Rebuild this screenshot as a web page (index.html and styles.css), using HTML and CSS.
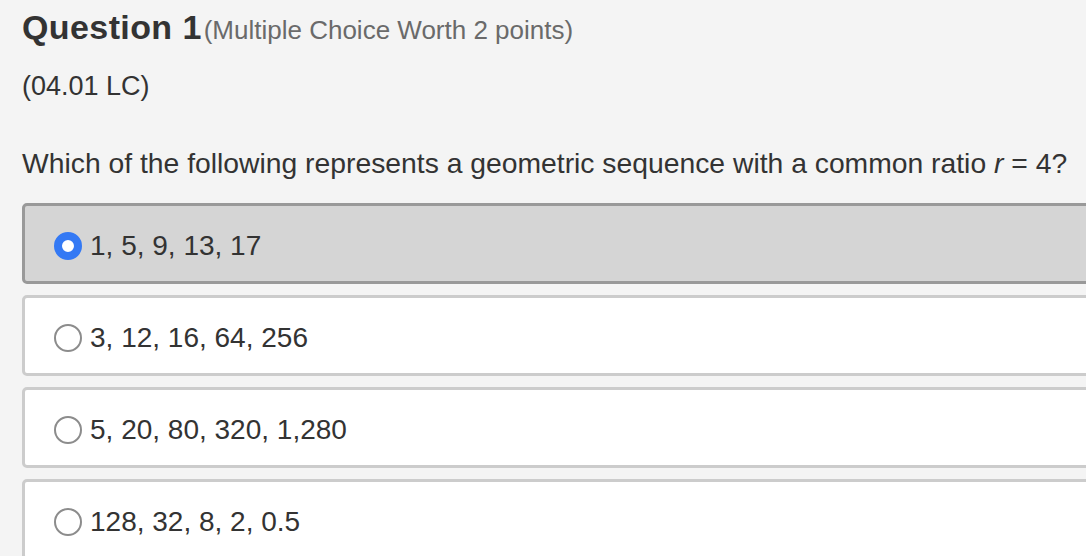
FILE: index.html
```html
<!DOCTYPE html>
<html lang="en">
<head>
<meta charset="utf-8">
<title>Question 1</title>
<link rel="stylesheet" href="styles.css">
</head>
<body>
<main class="page">
  <h1 class="q-title">Question 1<span class="q-meta">(Multiple Choice Worth 2 points)</span></h1>
  <p class="q-code">(04.01 LC)</p>
  <p class="q-text">Which of the following represents a geometric sequence with a common ratio <i>r</i> = 4?</p>
  <div class="options">
    <label class="option selected"><span class="radio"></span><span class="opt-text">1, 5, 9, 13, 17</span></label>
    <label class="option"><span class="radio"></span><span class="opt-text">3, 12, 16, 64, 256</span></label>
    <label class="option"><span class="radio"></span><span class="opt-text">5, 20, 80, 320, 1,280</span></label>
    <label class="option"><span class="radio"></span><span class="opt-text">128, 32, 8, 2, 0.5</span></label>
  </div>
</main>
</body>
</html>
```
FILE: styles.css
```css
html, body {
  margin: 0;
  padding: 0;
  background: #f4f4f4;
  overflow: hidden;
}
body {
  width: 1086px;
  height: 556px;
  font-family: "Liberation Sans", Arial, Helvetica, sans-serif;
  color: #333333;
}
.page {
  padding: 5px 0 0 22px;
}
.q-title {
  margin: 0;
  font-size: 34px;
  line-height: 44px;
  font-weight: bold;
  letter-spacing: 0.4px;
  color: #333333;
}
.q-meta {
  font-size: 26px;
  font-weight: normal;
  letter-spacing: 0;
  color: #6a6a6a;
  margin-left: 2px;
}
.q-code {
  margin: 16px 0 0 0;
  font-size: 27px;
  line-height: 36px;
  color: #333333;
}
.q-text {
  margin: 41px 0 0 0;
  font-size: 28.3px;
  line-height: 36px;
  color: #333333;
  white-space: nowrap;
}
.q-text i {
  font-style: italic;
}
.options {
  margin-top: 22px;
  display: flex;
  flex-direction: column;
  gap: 11px;
}
.option {
  box-sizing: border-box;
  width: 1100px;
  height: 81px;
  display: flex;
  align-items: center;
  gap: 8px;
  padding: 4px 0 0 29px;
  background: #ffffff;
  border: 3px solid #cccccc;
  border-radius: 5px;
}
.option.selected {
  background: #d5d5d5;
  border-color: #999999;
}
.radio {
  box-sizing: border-box;
  flex: none;
  width: 28px;
  height: 28px;
  border-radius: 50%;
  border: 2.5px solid #8c8c8c;
  background: #ffffff;
}
.option.selected .radio {
  border: 8.5px solid #3479f4;
  background: #ffffff;
}
.opt-text {
  font-size: 28px;
  line-height: 32px;
  color: #333333;
}
```
